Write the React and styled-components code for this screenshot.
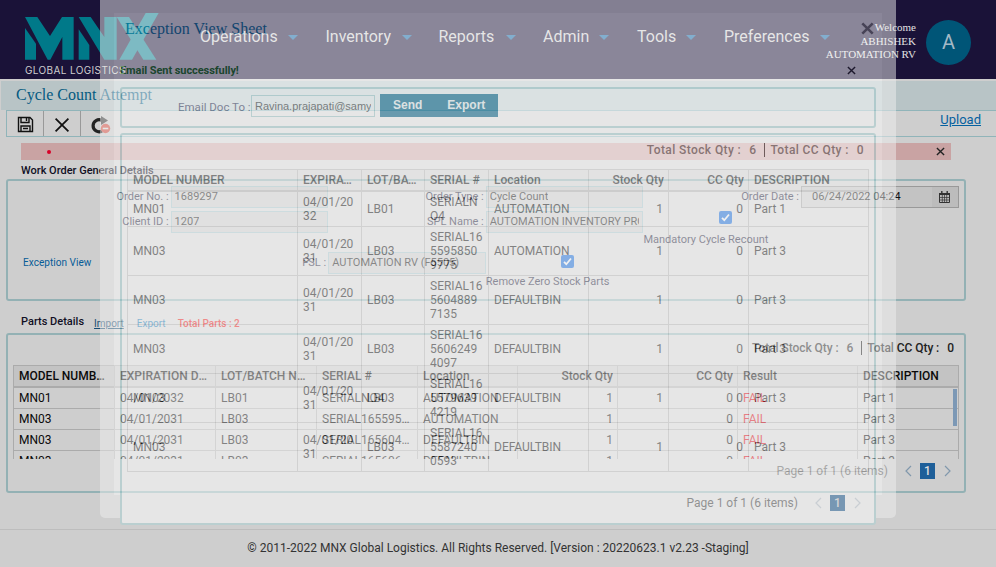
import React from 'react';
import styled, { createGlobalStyle } from 'styled-components';

const Global = createGlobalStyle`
  * { box-sizing: border-box; }
  html, body { margin: 0; height: 567px; overflow: hidden; }
  body { background: #cecece; font-family: Roboto, sans-serif; font-size: 12px; color: #151515; }
`;

const Page = styled.div`
  position: relative;
  width: 996px;
  height: 567px;
  overflow: hidden;
  display: flex;
  flex-direction: column;
`;

const Header = styled.header`
  height: 79px;
  flex: none;
  background: #1a1238;
  display: flex;
  align-items: flex-start;
`;
const Brand = styled.div`
  width: 134px;
  margin-left: 25px;
  padding-top: 13px;
  svg { display: block; }
`;
const Tagline = styled.div`
  font: 10px/12px Inter, sans-serif;
  letter-spacing: 0.37px;
  color: #cecece;
  margin-top: 4px;
  white-space: nowrap;
`;
const Nav = styled.nav`
  display: flex;
  margin-left: 41px;
  padding-top: 26px;
  width: 626px;
`;
const NavItem = styled.div`
  display: flex;
  align-items: center;
  flex: none;
  width: ${p => p.$w}px;
  font-size: 16px;
  line-height: 21px;
  color: #cecece;
`;
const NavText = styled.span`
  width: ${p => p.$w}px;
  white-space: nowrap;
`;
const Caret = styled.i`
  margin-left: 10px;
  margin-top: 2px;
  border: 5px solid transparent;
  border-top-color: #0a60a0;
  border-bottom: 0;
`;
const Welcome = styled.div`
  width: 120px;
  margin-left: -30px;
  padding-top: 21px;
  text-align: right;
  font: 11px/13.7px "Liberation Serif", serif;
  color: #e2e2e2;
  white-space: nowrap;
`;
const Avatar = styled.div`
  width: 45px;
  height: 45px;
  margin: 20px 0 0 10px;
  border-radius: 50%;
  background: #005577;
  color: #a3b9c6;
  font-size: 20px;
  line-height: 45px;
  text-align: center;
`;

const TitleBar = styled.div`
  height: 29px;
  flex: none;
  margin: 2px 0 0 1px;
  padding-left: 15px;
  background: #b8c4c6;
  font: 16px/28px "Liberation Serif", serif;
  color: #045a80;
`;
const Toolbar = styled.div`
  height: 27px;
  flex: none;
  margin-left: 6px;
  border: 1px solid #90b4b9;
  border-right: 0;
  display: flex;
`;
const Tool = styled.div`
  width: 37px;
  border-right: ${p => (p.$last ? '0' : '1px solid #999')};
  display: flex;
  align-items: center;
  justify-content: center;
  padding: ${p => (p.$last ? '3px 0 0 2px' : '2px 0 0')};
`;
const Upload = styled.a`
  margin: 0 15px 0 auto;
  font-size: 13px;
  line-height: 17px;
  color: #0561a0;
  text-decoration: underline;
`;
const Alert = styled.div`
  height: 17px;
  flex: none;
  margin: 6px 45px 0 21px;
  padding: 0 6px 1px 26px;
  background: #c9a3a3;
  display: flex;
  align-items: center;
  justify-content: space-between;
`;
const Dot = styled.i`
  width: 4px;
  height: 4px;
  margin-top: 1px;
  border-radius: 50%;
  background: #d80027;
`;

const SectionTitle = styled.div`
  height: ${p => p.$h}px;
  flex: none;
  padding: ${p => p.$top}px 0 0 21px;
  font-size: 11px;
  line-height: 21px;
  font-weight: 500;
  color: #111024;
  display: flex;
`;
const MiniLink = styled.span`
  margin-left: ${p => p.$gap}px;
  padding-top: 2px;
  font-size: 10px;
  line-height: 21px;
  font-weight: ${p => (p.$bold ? 500 : 400)};
  color: ${p => p.$c};
  text-decoration: ${p => (p.$line ? 'underline' : 'none')};
`;
const Panel = styled.section`
  height: ${p => p.$h}px;
  width: 960px;
  flex: none;
  margin-left: 6px;
  border: 2px solid #93b1b4;
  border-radius: 3px;
  padding: 0 5px;
`;
const Form = styled.div`
  padding-top: 5px;
  display: grid;
  grid-template-columns: repeat(6, 157.6px);
  grid-template-rows: 25px 41px 40px;
`;
const Label = styled.label`
  text-align: right;
  padding-right: 2px;
  font-size: 11px;
  line-height: 22px;
  color: #1c2038;
`;
const Input = styled.div`
  height: 22px;
  border: 1px solid ${p => (p.$gray ? '#999' : '#9ebcc0')};
  background: #c3c3c3;
  padding: 0 3px;
  font-size: 11px;
  line-height: 20px;
  color: #111;
  overflow: hidden;
  white-space: nowrap;
  display: flex;
  > span { overflow: hidden; }
`;
const DateInput = styled(Input)`
  padding: 0;
  > span { padding-left: 10px; width: 130px; flex: none; }
  > i { background: #bcbcbc; width: 27px; height: 20px; display: flex; align-items: center; justify-content: center; }
`;
const Check = styled.div`
  display: flex;
  flex-direction: column;
  align-items: center;
  font-size: 11px;
  line-height: 14px;
  color: #1c2038;
  svg { margin: ${p => p.$top}px 0 ${p => p.$gap}px 6px; flex: none; }
  span { align-self: flex-start; white-space: nowrap; }
`;
const FormLink = styled.a`
  padding-left: 10px;
  font-size: 10px;
  line-height: 22px;
  letter-spacing: 0.05px;
  color: #075c97;
`;

const Totals = styled.div`
  display: flex;
  justify-content: flex-end;
  align-items: center;
  height: 30px;
  padding: 0 ${p => p.$r}px ${p => p.$up}px 0;
  font-size: 12px;
  font-weight: ${p => p.$weight};
  letter-spacing: ${p => p.$ls}px;
  color: ${p => p.$c};
  b { font-weight: inherit; margin-left: 8px; }
  i { width: 1px; height: 14px; background: #111; margin: 0 5px 0 8px; }
`;
const Table = styled.div`
  width: ${p => p.$w}px;
  height: ${p => p.$h}px;
  overflow: hidden;
  position: relative;
  border: 1px solid ${p => p.$line};
  border-width: 1px 0 0 1px;
  font-size: 12px;
`;
const Row = styled.div`
  display: grid;
  grid-template-columns: ${p => p.$cols};
  height: ${p => p.$h}px;
  font-weight: ${p => (p.$head ? 500 : 400)};
  background: ${p => (p.$head ? p.$bg : 'transparent')};
  color: ${p => p.$c};
`;
const Cell = styled.div`
  display: flex;
  align-items: center;
  justify-content: ${p => (p.$right ? 'flex-end' : 'flex-start')};
  padding: 0 ${p => (p.$wrap ? 5 : 4)}px 0 5px;
  border-right: 1px solid ${p => p.$line};
  border-bottom: ${p => (p.$head ? 2 : 1)}px solid ${p => p.$line};
  overflow: hidden;
  line-height: 14px;
  color: ${p => (p.$red ? '#cf0510' : 'inherit')};
  span {
    overflow: hidden;
    text-overflow: ellipsis;
    white-space: ${p => (p.$wrap ? 'normal' : 'nowrap')};
    word-break: break-all;
  }
`;
const ScrollThumb = styled.div`
  position: absolute;
  right: 2px;
  top: 23px;
  width: 4px;
  height: 37px;
  background: #7c98b5;
`;
const Pager = styled.div`
  display: flex;
  align-items: center;
  justify-content: flex-end;
  height: 17px;
  margin-top: ${p => p.$top}px;
  padding-right: ${p => p.$r}px;
  color: #555;
  font-size: 12px;
  b { width: 15px; height: 16px; margin: 0 9px 0 8px; background: #1e5f99; color: #ddd; text-align: center; line-height: 16px; font-weight: 500; }
  span { margin-right: 17px; }
  svg { opacity: ${p => (p.$faint ? 0.45 : 1)}; }
`;
const Footer = styled.footer`
  margin-top: auto;
  height: 38px;
  flex: none;
  border-top: 1px solid #bdbdbd;
  text-align: center;
  line-height: 36px;
  color: #333;
`;

const Modal = styled.div`
  position: absolute;
  left: 100px;
  top: -4px;
  width: 796px;
  height: 522px;
  padding: 17px 14px 0;
  background: #f0f0f0;
  border-radius: 5px;
  opacity: 0.49;
`;
const ModalBody = styled.div`
  height: 482px;
  background: #fff;
  padding: 0 6px;
`;
const ModalHead = styled.div`
  display: flex;
  justify-content: space-between;
  height: 48px;
  padding: 4px 2px 0 5px;
  font: 16px/24px "Liberation Serif", serif;
  color: #0a7aa8;
  svg { margin-top: 5px; }
`;
const Message = styled.div`
  display: flex;
  justify-content: space-between;
  height: 26px;
  padding: 0 20px 0 0;
  font: bold 11px/20px Roboto, sans-serif;
  letter-spacing: -0.07px;
  color: #1b7b22;
  svg { margin-top: 5px; }
`;
const Box = styled.div`
  width: 756px;
  height: ${p => p.$h}px;
  border: 2px solid #a6d2d4;
  border-radius: 3px;
  margin-bottom: 5px;
  background: #fff;
`;
const MailRow = styled.div`
  display: flex;
  align-items: center;
  padding: 5px 0 0 56px;
  white-space: nowrap;
  > label { width: 73px; color: #424066; font-size: 11.5px; padding-top: 3px; }
`;
const MailInput = styled.div`
  width: 124px;
  height: 22px;
  border: 1px solid #a6d2d4;
  background: #fff;
  padding: 0 3px;
  font: 11px/20px "Liberation Sans", sans-serif;
  letter-spacing: -0.02px;
  color: #333;
  > span { display: block; overflow: hidden; }
`;
const Actions = styled.div`
  margin-left: 5px;
  width: 118px;
  height: 23px;
  background: #00668f;
  color: #fff;
  font: bold 12px/22px "Liberation Sans", sans-serif;
  display: flex;
  padding-left: 13px;
  gap: 25px;
`;
const ModalGridBox = styled(Box)`
  padding: 4px 0 0 5px;
`;

const Cross = ({ s, w = 1.5, c = '#222' }) => (
  <svg width={s} height={s} viewBox="0 0 10 10" stroke={c} strokeWidth={w}>
    <path d="M1 1 9 9M9 1 1 9" />
  </svg>
);
const Arrow = ({ flip }) => (
  <svg width="7" height="12" viewBox="0 0 7 12" fill="none" stroke="#8198ac" strokeWidth="1.2">
    <path d={flip ? 'M1 1 6 6 1 11' : 'M6 1 1 6 6 11'} />
  </svg>
);
const Tick = () => (
  <svg width="13" height="13" viewBox="0 0 13 13">
    <rect width="13" height="13" rx="2" fill="#0d61cb" />
    <path d="M3 6.8 5.3 9.2 10 3.5" fill="none" stroke="#e4e4e4" strokeWidth="1.8" />
  </svg>
);
const Logo = () => (
  <svg width="134" height="47" viewBox="75 39 402 141" fill="#007989">
    <path d="M75 51h37l38 57 36-57h35v128h-34v-68l-36 68h-8z" />
    <path d="M75 84l33 47v48H75z" />
    <path d="M236 51h36l41 60V51h37v128h-37z" />
    <path d="M236 88l32 47v44h-32z" />
    <path d="M350 51h37l82 128h-39z" />
    <path d="M358 179 437 39h39l-80 140z" />
  </svg>
);
const Save = () => (
  <svg width="17" height="17" viewBox="0 0 17 17" fill="none" stroke="#111" strokeWidth="1.4">
    <path d="M1.5 1.5H13l2.5 2.5v11.5h-14zM4 1.5v5h8v-5M4 15.5V10h9v5.5M6 12.5h5M9.5 2v3" />
  </svg>
);
const Reset = () => (
  <svg width="20" height="20" viewBox="0 0 20 20">
    <path d="M11 5.5A6 6 0 1 0 11 16" fill="none" stroke="#222" strokeWidth="3.2" />
    <path d="M10 1v9l7-4.5z" fill="#333" />
    <circle cx="14.5" cy="13.5" r="4.7" fill="#d14a3d" />
    <path d="M11.7 13.5h5.6" stroke="#ddd" strokeWidth="1.6" />
  </svg>
);
const Calendar = () => (
  <svg width="11" height="12" viewBox="0 0 11 12" fill="none" stroke="#333">
    <path d="M.5 2.5h10v9H.5z" strokeWidth="1" />
    <path d="M0 3h11" strokeWidth="2" />
    <path d="M2.8 0v3M8.2 0v3" strokeWidth="1.4" />
    <path d="M1 6.5h9M1 9h9M3.3 4v7M5.5 4v7M7.7 4v7" strokeWidth=".7" />
  </svg>
);

const nav = [
  ['Operations', 125.5, 78], ['Inventory', 113, 66], ['Reports', 104.5, 57],
  ['Admin', 94, 46], ['Tools', 87, 39], ['Preferences', 110, 86],
];
const dark = '#ababab';
const light = '#d6d6d6';
const pageCols = '101px 101px 101px 101px 100px 100px 120px 120px 101px';
const pageHead = ['MODEL NUMBER', 'EXPIRATION DATE', 'LOT/BATCH NUMBER', 'SERIAL #', 'Location', 'Stock Qty', 'CC Qty', 'Result', 'DESCRIPTION'];
const pageRows = [
  ['MN01', '04/01/2032', 'LB01', 'SERIALNO4', 'AUTOMATION', '1', '0', 'FAIL', 'Part 1'],
  ['MN03', '04/01/2031', 'LB03', 'SERIAL1655958509775', 'AUTOMATION', '1', '0', 'FAIL', 'Part 3'],
  ['MN03', '04/01/2031', 'LB03', 'SERIAL1656048897135', 'DEFAULTBIN', '1', '0', 'FAIL', 'Part 3'],
  ['MN03', '04/01/2031', 'LB03', 'SERIAL1656062494097', 'DEFAULTBIN', '1', '0', 'FAIL', 'Part 3'],
];
const modalCols = '170px 64px 63px 64px 100px 80px 80px 120px';
const modalHead = ['MODEL NUMBER', 'EXPIRATION', 'LOT/BATCH', 'SERIAL #', 'Location', 'Stock Qty', 'CC Qty', 'DESCRIPTION'];
const modalRows = [
  ['MN01', '04/01/2032', 'LB01', 'SERIALN\u200bO4', 'AUTOMATION', '1', '0', 'Part 1'],
  ['MN03', '04/01/2031', 'LB03', 'SERIAL16\u200b5595850\u200b9775', 'AUTOMATION', '1', '0', 'Part 3'],
  ['MN03', '04/01/2031', 'LB03', 'SERIAL16\u200b5604889\u200b7135', 'DEFAULTBIN', '1', '0', 'Part 3'],
  ['MN03', '04/01/2031', 'LB03', 'SERIAL16\u200b5606249\u200b4097', 'DEFAULTBIN', '1', '0', 'Part 3'],
  ['MN03', '04/01/2031', 'LB03', 'SERIAL16\u200b5579639\u200b4219', 'DEFAULTBIN', '1', '0', 'Part 3'],
  ['MN03', '04/01/2031', 'LB03', 'SERIAL16\u200b5587240\u200b0593', 'DEFAULTBIN', '1', '0', 'Part 3'],
];

const lines = t => t.split('\u200b').map((s, i) => (
  <React.Fragment key={i}>{i > 0 && <br />}{s}</React.Fragment>
));

function Grid({ head, rows, cols, line, bg, color, headH, heights, wrap }) {
  return (
    <>
      <Row $cols={cols} $h={headH} $head $bg={bg} $c={color}>
        {head.map((t, i) => (
          <Cell key={i} $line={line} $head $right={i === 5 || i === 6}><span>{t}</span></Cell>
        ))}
      </Row>
      {rows.map((r, j) => (
        <Row key={j} $cols={cols} $h={heights[j]} $c={color}>
          {r.map((t, i) => (
            <Cell key={i} $line={line} $right={i === 5 || i === 6} $red={t === 'FAIL'} $wrap={wrap}><span>{lines(t)}</span></Cell>
          ))}
        </Row>
      ))}
    </>
  );
}

const Sums = props => (
  <Totals {...props}>Total Stock Qty :<b>6</b><i />Total CC Qty :<b>0</b></Totals>
);
const Pages = props => (
  <Pager {...props}><span>Page 1 of 1 (6 items)</span><Arrow /><b>1</b><Arrow flip /></Pager>
);

export default function App() {
  return (
    <Page>
      <Global />
      <Header>
        <Brand><Logo /><Tagline>GLOBAL LOGISTICS</Tagline></Brand>
        <Nav>
          {nav.map(([t, w, tw]) => (
            <NavItem key={t} $w={w}><NavText $w={tw}>{t}</NavText><Caret /></NavItem>
          ))}
        </Nav>
        <Welcome>Welcome<br />ABHISHEK<br />AUTOMATION RV</Welcome>
        <Avatar>A</Avatar>
      </Header>
      <TitleBar>Cycle Count Attempt</TitleBar>
      <Toolbar>
        <Tool><Save /></Tool>
        <Tool><Cross s={16} w={1.1} c="#111" /></Tool>
        <Tool $last><Reset /></Tool>
        <Upload>Upload</Upload>
      </Toolbar>
      <Alert><Dot /><Cross s={9} /></Alert>
      <SectionTitle $h={19} $top={0}>Work Order General Details</SectionTitle>
      <Panel $h={122}>
        <Form>
          <Label>Order No. :</Label><Input><span>1689297</span></Input>
          <Label>Order Type :</Label><Input><span>Cycle Count</span></Input>
          <Label>Order Date :</Label><DateInput $gray><span>06/24/2022 04:24</span><i><Calendar /></i></DateInput>
          <Label>Client ID :</Label><Input><span>1207</span></Input>
          <Label>SPL Name :</Label><Input><span>AUTOMATION INVENTORY PROGRAM</span></Input>
          <Check $top={0} $gap={9}><Tick /><span>Mandatory Cycle Recount</span></Check><i />
          <FormLink>Exception View</FormLink>
          <Label>FSL :</Label><Input><span>AUTOMATION RV (F5505)</span></Input>
          <Check $top={3} $gap={7}><Tick /><span>Remove Zero Stock Parts</span></Check>
        </Form>
      </Panel>
      <SectionTitle $h={32} $top={10}>
        Parts Details
        <MiniLink $gap={10} $c="#174a70" $line>Import</MiniLink>
        <MiniLink $gap={13} $c="#1272ac">Export</MiniLink>
        <MiniLink $gap={12} $c="#e01818" $bold>Total Parts : 2</MiniLink>
      </SectionTitle>
      <Panel $h={160}>
        <Sums $r={5} $up={4} $ls={-0.06} $weight={500} $c="#222" />
        <Table $w={946} $h={94} $line={dark}>
          <Grid head={pageHead} rows={pageRows} cols={pageCols} line={dark} bg="#c3c3c3" color="#0a0a0a" headH={22} heights={[21, 21, 21, 21]} />
          <ScrollThumb />
        </Table>
        <Pages $top={3} $r={8} />
      </Panel>
      <Footer>© 2011-2022 MNX Global Logistics. All Rights Reserved. [Version : 20220623.1 v2.23 -Staging]</Footer>
      <Modal>
        <ModalBody>
          <ModalHead>Exception View Sheet<Cross s={13} w={2} c="#777" /></ModalHead>
          <Message>Email Sent successfully!<Cross s={9} w={1.6} c="#222" /></Message>
          <Box $h={41}>
            <MailRow>
              <label>Email Doc To :</label>
              <MailInput><span>Ravina.prajapati@samyak.com</span></MailInput>
              <Actions><span>Send</span><span>Export</span></Actions>
            </MailRow>
          </Box>
          <ModalGridBox $h={392}>
            <Sums $r={10} $up={9} $ls={0.4} $weight={500} $c="#444" />
            <Table $w={742} $h={303} $line={light}>
              <Grid wrap head={modalHead} rows={modalRows} cols={modalCols} line={light} bg="#f7f7f7" color="#333" headH={22} heights={[35, 49, 49, 49, 49, 49]} />
            </Table>
            <Pages $top={22} $r={13} $faint />
          </ModalGridBox>
        </ModalBody>
      </Modal>
    </Page>
  );
}
